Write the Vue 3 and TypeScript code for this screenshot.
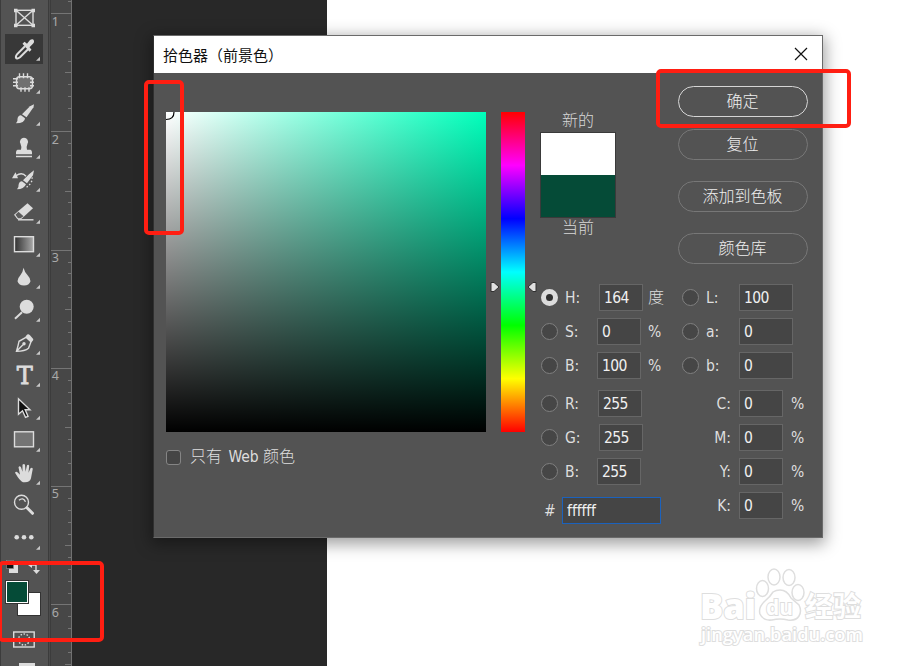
<script setup lang="ts">
import { ref } from 'vue'

interface Field {
  id: string
  label: string
  value: string
  unit?: string
  radio?: boolean
  shift?: string
}

const mode = ref('hue')

const hsb: Field[] = [
  { id: 'hue', label: 'H:', value: '164', unit: '度', radio: true, shift: 's2' },
  { id: 'sat', label: 'S:', value: '0', unit: '%', radio: true },
  { id: 'bri', label: 'B:', value: '100', unit: '%', radio: true },
]
const rgb: Field[] = [
  { id: 'red', label: 'R:', value: '255', radio: true, shift: 's1' },
  { id: 'green', label: 'G:', value: '255', radio: true, shift: 's2' },
  { id: 'blue', label: 'B:', value: '255', radio: true },
]
const lab: Field[] = [
  { id: 'l', label: 'L:', value: '100', radio: true },
  { id: 'a', label: 'a:', value: '0', radio: true },
  { id: 'b', label: 'b:', value: '0', radio: true },
]
const cmyk: Field[] = [
  { id: 'c', label: 'C:', value: '0', unit: '%' },
  { id: 'm', label: 'M:', value: '0', unit: '%' },
  { id: 'y', label: 'Y:', value: '0', unit: '%' },
  { id: 'k', label: 'K:', value: '0', unit: '%' },
]
const tools = [
  'frame', 'eyedropper', 'patch', 'brush', 'stamp', 'history', 'eraser', 'gradient', 'blur',
  'dodge', 'pen', 'type', 'select', 'shape', 'hand', 'zoom', 'more',
]
const noFlyout = ['frame', 'zoom']

const step = 118.25 / 10
const ticks = Array.from({ length: 57 }, (_, i) => {
  const n = i - 1
  const len = n % 10 === 0 ? 20 : n % 5 === 0 ? 6 : 3
  return { y: Math.round(13.2 + n * step) + 0.5, len }
})
const numbers = [1, 2, 3, 4, 5, 6].map((n) => ({ n, y: 26 + (n - 1) * 118.1 }))
</script>

<template>
  <div class="screen">
    <aside class="toolbar">
      <div v-for="t in tools" :key="t" class="tool" :class="{ active: t === 'eyedropper' }">
        <svg width="48" height="32.6" viewBox="-24 -16.3 48 32.6">
          <g v-if="t === 'frame'" class="line">
            <rect x="-8" y="-7" width="17" height="15" />
            <path d="M-8-7 9 8M9-7-8 8" />
            <path class="fill" stroke="none" d="M-10-8.500h3.500v3.500h-3.500zM7.500-8.500h3.500v3.500h-3.500zM-10 6.500h3.500v3.500h-3.500zM7.500 6.500h3.500v3.500h-3.500z" />
          </g>
          <g v-else-if="t === 'eyedropper'">
            <path class="line thick" d="M1-3-7 5Q-9 8-7.500 9-6 9.500-4 8L4 0" />
            <path class="fill" d="M-1.500-5.500.5-7.500 3-5.500 6-9.200Q9-11 10-8.500 10.500-7 9-5.500L5.500-2 7.500.5 5.500 2.500Z" />
          </g>
          <g v-else-if="t === 'patch'">
            <rect class="line" x="-7.500" y="-5.500" width="16" height="12" rx="3" style="fill: #707070" />
            <path class="line" d="M-4.500-9v5M-.5-9v5M3.500-9v5M-3 5v4.500M1 5v4.500M5 5v4.500M-11-3.500h5M-11 0h5M-11 3.500h5M6-3.500h4M6 0h4M6 3.500h4" />
          </g>
          <g v-else-if="t === 'brush'" class="fill">
            <path d="M10-10 9.500-7 2.500 3-2 0 6-8Z" />
            <path d="M-3 1 1 4Q1 9-8 9-6 7-6.500 4.500-6 1-3 1Z" />
          </g>
          <g v-else-if="t === 'stamp'" class="fill">
            <path d="M0-9.500A4 4 0 0 1 3.500-3.500Q2 0 3 2.500H6.500Q8 3 8 5V7H-8V5Q-8 3-6.500 2.500H-3Q-2 0-3.500-3.500A4 4 0 0 1 0-9.500ZM-8 8.500H8V10H-8Z" />
          </g>
          <g v-else-if="t === 'history'">
            <path class="fill" d="M10-10 9-5 3 3-1 0 5-6ZM-2 1 2 4Q0 9-7 9-5 7-5.500 5-5 1-2 1Z" />
            <path class="line" d="M-8-4.500Q-2-9 2-4" />
            <path class="fill" d="M-12-2-8.500-8-6-2Z" />
            <path class="line" stroke-dasharray="1.500 2" d="M8-3Q9 3 1 8" />
          </g>
          <g v-else-if="t === 'eraser'">
            <path class="fill" d="M3.500-9 9-4-3 7H-6.500L-10 2.500Z" />
            <path d="M-5.500-.5-.5 4-3.500 6H-6L-8.500 2.500Z" fill="#5c5c5c" />
            <path class="line" d="M-6 7.500H9.500" />
          </g>
          <g v-else-if="t === 'gradient'">
            <defs><linearGradient id="tool-ramp"><stop stop-color="#303030" /><stop offset="1" stop-color="#aaa" /></linearGradient></defs>
            <rect class="line" x="-9.500" y="-8.600" width="19" height="15" style="fill: url(#tool-ramp)" />
          </g>
          <path v-else-if="t === 'blur'" class="fill" d="M-.5-9.500Q.5-5 4-1.500 6.500 1 6.500 4A6.700 5.600 0 0 1-6.500 4Q-6.500 1-4-1.500-1-5-.5-9.500Z" />
          <g v-else-if="t === 'dodge'">
            <circle class="fill" cx="2.700" cy="-3.500" r="7" />
            <path class="line thick" d="M-2 2-9 8.500" />
          </g>
          <g v-else-if="t === 'pen'">
            <path class="line" d="M2-6-5-2Q-6 3-7.500 8 1 8 4.500 5L7-1.500ZM-7 7.500-1 1.500" />
            <circle class="fill" cx="0" cy=".5" r="1.700" />
            <path class="fill" d="M2.500-8Q4-10 6-8L9-4.500Q10-3.500 7.500-1L1.500-6.500Z" />
          </g>
          <text v-else-if="t === 'type'" class="type" x=".7" y="8.500" text-anchor="middle">T</text>
          <path v-else-if="t === 'select'" class="line" style="fill: #111" d="M-5.500-9.500V6L-1.500 2.500 1.500 9 4 8 1.200 1.500H6Z" />
          <rect v-else-if="t === 'shape'" class="line" x="-9.500" y="-8.500" width="19" height="15" style="fill: #747474" />
          <path v-else-if="t === 'hand'" class="fill" d="M-9-.5Q-8-2.500-6-.5L-4 1.500-5.500-6Q-4.500-8-3-6L-1.500-1.500V-8.500Q0-10 1-8.500L1.500-1.500 3-8Q4.500-9.500 5.200-7.500L4.500-.5 6.500-5Q8-6.500 8.800-4.500L7 5Q6 9 1 9H-1Q-4 8-9-.5Z" />
          <g v-else-if="t === 'zoom'">
            <circle class="line" cx="-2.500" cy="-4" r="7" />
            <path class="line" d="M-5-6Q-1-9.500 1.500-4.500" />
            <path class="line fat" d="M3 1.500 8.500 7" />
          </g>
          <g v-else class="fill">
            <circle cx="-7.300" cy="-1" r="2.300" /><circle cx="0" cy="-1" r="2.300" /><circle cx="7.300" cy="-1" r="2.300" />
          </g>
          <path v-if="!noFlyout.includes(t)" class="corner" d="M16 7.500V11.500H12Z" />
        </svg>
      </div>
      <svg class="palette" width="48" height="112" viewBox="0 554 48 112">
        <rect x="9" y="564" width="9" height="9" fill="#ddd" />
        <rect x="6.500" y="560.500" width="7" height="8" fill="#111" stroke="#888" stroke-width=".7" />
        <path class="line" d="M30 565h6v6" />
        <path class="fill" d="M28 565l4-3v6zM33 570h7l-3.500 4z" />
        <rect x="17.500" y="592.500" width="23" height="23" fill="#fff" stroke="#333" />
        <rect x="5.500" y="580.500" width="23" height="23" fill="#fff" stroke="#333" />
        <rect x="7" y="582" width="20" height="20" fill="#054b37" />
        <rect class="line" x="13.700" y="632" width="20.500" height="15" />
        <circle class="line" cx="24" cy="639.500" r="5.500" stroke-dasharray="1.500 1.600" />
        <rect class="fill" x="19" y="663" width="16" height="3" />
      </svg>
    </aside>

    <svg class="ruler" width="24" height="666" viewBox="48 0 24 666">
      <rect x="48" y="0" width="3" height="666" fill="#3c3c3c" />
      <rect x="49" y="0" width="1" height="666" fill="#4b4b4b" />
      <path v-for="k in ticks" :key="k.y" :d="`M${71 - k.len} ${k.y}H71`" stroke="#757575" />
      <path d="M71.500 0V666" stroke="#707070" />
      <text v-for="m in numbers" :key="m.n" x="51.700" :y="m.y">{{ m.n }}</text>
    </svg>
    <div class="canvas"></div>

    <section class="dialog">
      <header>
        <h1>拾色器（前景色）</h1>
        <svg width="14" height="14" viewBox="0 0 14 14"><path d="M1 1 13 13M13 1 1 13" stroke="#111" stroke-width="1.200" /></svg>
      </header>
      <div class="body">
        <div class="picker">
          <div class="spectra">
            <div class="plane">
              <svg width="9" height="9"><path d="M8 0Q8 7.500 0 7.500" fill="none" stroke="#000" stroke-width="1.200" /></svg>
            </div>
            <div class="slider">
              <svg width="10" height="12" viewBox="0 0 10 12"><path d="M1 1.500H4L9 6 4 10.500H1Z" /></svg>
              <div class="hue"></div>
              <svg width="10" height="12" viewBox="0 0 10 12"><path d="M9 1.500H6L1 6 6 10.500H9Z" /></svg>
            </div>
          </div>
          <label class="web"><i></i><span>只有 <b>Web</b> 颜色</span></label>
        </div>
        <div class="side">
          <div class="top">
            <div class="compare">
              <span>新的</span>
              <div class="chips"><i class="new"></i><i class="old"></i></div>
              <span>当前</span>
            </div>
            <div class="actions">
              <button class="primary">确定</button>
              <button>复位</button>
              <button>添加到色板</button>
              <button>颜色库</button>
            </div>
          </div>
          <div class="values">
            <div class="left">
              <div v-for="(group, g) in [hsb, rgb]" :key="g" class="group">
                <div v-for="f in group" :key="f.id" class="row">
                  <i class="radio" :class="{ on: f.id === mode }" @click="mode = f.id"></i>
                  <span class="name">{{ f.label }}</span>
                  <span class="input" :class="f.shift">{{ f.value }}</span>
                  <span v-if="f.unit" class="unit" :class="{ cjk: f.unit === '度' }">{{ f.unit }}</span>
                </div>
              </div>
              <div class="row hex"><span>#</span><span class="input">ffffff</span></div>
            </div>
            <div class="right">
              <div class="group">
                <div v-for="f in lab" :key="f.id" class="row">
                  <i class="radio"></i>
                  <span class="name">{{ f.label }}</span>
                  <span class="input wide">{{ f.value }}</span>
                </div>
              </div>
              <div class="group">
                <div v-for="f in cmyk" :key="f.id" class="row ink">
                  <span class="name">{{ f.label }}</span>
                  <span class="input">{{ f.value }}</span>
                  <span class="unit">{{ f.unit }}</span>
                </div>
              </div>
            </div>
          </div>
        </div>
      </div>
    </section>

    <svg class="watermark" width="180" height="90" viewBox="690 562 180 90">
      <g class="ghost">
        <text class="bai" x="700" y="619" font-size="36" textLength="56" lengthAdjust="spacingAndGlyphs">Bai</text>
        <ellipse cx="762.500" cy="588.500" rx="6" ry="8" />
        <ellipse cx="774" cy="577" rx="6" ry="8" />
        <ellipse cx="789" cy="577.500" rx="6" ry="8" />
        <ellipse cx="798" cy="592.500" rx="6" ry="8" />
        <path d="M780 590Q787 590 791 598L799 605Q802 611 799 616 796 621 788 620 780 618 772 620 763 621 760 614 758 607 765 601 770 597 773 592 776 590 780 590Z" />
        <text x="766" y="615" font-size="22" font-weight="700" textLength="27" lengthAdjust="spacingAndGlyphs">du</text>
        <text class="han" x="805" y="617" font-size="28">经验</text>
        <text class="url" x="701" y="641" font-size="18" textLength="162" lengthAdjust="spacingAndGlyphs">jingyan.baidu.com</text>
      </g>
    </svg>

    <div class="mark mark-plane"></div>
    <div class="mark mark-ok"></div>
    <div class="mark mark-colors"></div>
  </div>
</template>

<style>
body { overflow: hidden; background: #fff; }
</style>

<style scoped>
.screen {
  position: relative;
  display: flex;
  width: 913px;
  height: 666px;
  overflow: hidden;
  background: #fff;
  font-family: "DejaVu Sans Condensed", "DejaVu Sans", "Noto Sans CJK SC", sans-serif;
  font-stretch: condensed;
}
i, b { font-style: normal; font-weight: 400; }
.toolbar {
  box-sizing: border-box;
  width: 48px;
  height: 666px;
  padding-top: 0.6px;
  background: #535353;
  box-shadow: inset 1px 0 #3c3c3c;
}
.tool { height: 32.6px; }
.tool svg, .palette { display: block; }
.tool.active svg {
  background: linear-gradient(#383838, #383838) 5px 1px / 38px 30px no-repeat;
}
.line { fill: none; stroke: #dcdcdc; stroke-width: 1.4; }
.thick { stroke-width: 2; }
.fat { stroke-width: 3; stroke-linecap: round; }
.fill { fill: #dcdcdc; }
.corner { fill: #c8c8c8; }
.type { font: 24px "DejaVu Serif", serif; fill: #dcdcdc; stroke: #dcdcdc; stroke-width: 0.8; }
.palette { margin-top: -0.8px; }
.ruler { background: #474747; flex: none; }
.ruler text { font: 12.5px "Noto Sans", sans-serif; fill: #a9a9a9; }
.canvas { width: 255px; background: #282828; }

.dialog {
  position: absolute;
  left: 153px;
  top: 35px;
  box-sizing: border-box;
  width: 670px;
  height: 503px;
  border: 1px solid #6a6a6a;
  border-left-color: #303030;
  background: #535353;
  box-shadow: 0 4px 15px 2px rgba(0, 0, 0, 0.38);
}
header {
  display: flex;
  align-items: center;
  justify-content: space-between;
  height: 37px;
  padding: 0 14px 0 9px;
  background: #fff;
}
header svg { margin-top: -1px; }
h1 { margin: 0; font: 400 15px/20px "Noto Sans CJK SC", sans-serif; color: #111; }
.body { display: flex; padding-left: 12px; color: #dedede; }
.picker { padding-top: 39px; width: 374px; }
.spectra { display: flex; gap: 4px; }
.plane {
  width: 320px;
  height: 320px;
  background: linear-gradient(to bottom, transparent, #000), linear-gradient(to right, #fff, #00ffbb);
}
.plane svg, .slider svg { display: block; }
.slider { display: flex; }
.slider svg { margin-top: 169px; flex: none; fill: #e0e0e0; stroke: #303030; stroke-width: 1; }
.slider svg:first-child { margin-right: 1px; }
.slider svg:last-child { margin-left: 2px; }
.hue {
  width: 24px;
  height: 320px;
  background: linear-gradient(#f00, #f0f 16.66%, #00f 33.33%, #0ff 50%, #0f0 66.66%, #ff0 83.33%, #f00);
}
.web { display: flex; align-items: center; gap: 9px; margin-top: 14px; height: 22px; font: 16px/22px "Noto Sans CJK SC", sans-serif; font-weight: 300; }
.web span { margin-top: -4px; }
.web i { box-sizing: border-box; width: 15px; height: 15px; border: 1px solid #858585; border-radius: 3px; background: #454545; }
.web b { font: 15.500px "DejaVu Sans Condensed", sans-serif; font-stretch: condensed; margin: 0 1px 0 3px; letter-spacing: -0.1px; }
.side { width: 282px; }
.top { display: flex; height: 211px; }
.compare {
  width: 76px;
  padding-top: 36px;
  text-align: center;
  font: 300 16px/20px "Noto Sans CJK SC", sans-serif;
  color: #d8d8d8;
}
.compare span { display: block; height: 20px; }
.chips { box-sizing: border-box; height: 86px; margin: 3px 0 -2px; border: 1px solid #3a3a3a; }
.chips i { display: block; height: 42px; }
.new { background: #fff; }
.old { background: #054b37; }
.actions { display: flex; flex-direction: column; gap: 21px; margin-left: 62px; padding-top: 13px; }
button {
  box-sizing: border-box;
  width: 130px;
  height: 31px;
  padding: 0 1px 2px 0;
  border: 1px solid #777;
  border-radius: 16px;
  background: transparent;
  color: #eee;
  font: 300 16px/27px "Noto Sans CJK SC", sans-serif;
}
button.primary { margin-bottom: -9px; border: 1.500px solid #d5d5d5; }
.values { display: flex; padding-left: 1px; font-size: 15.500px; letter-spacing: -0.6px; }
.left { width: 141px; }
.group { display: flex; flex-direction: column; gap: 7px; margin-bottom: 11px; }
.row { display: flex; align-items: center; height: 27px; white-space: nowrap; }
.radio { box-sizing: border-box; flex: none; width: 17px; height: 17px; border: 1px solid #808080; border-radius: 50%; background: #464646; }
.radio.on { border: 5px solid #dcdcdc; background: #303030; }
.name { width: 32px; margin-left: 7px; letter-spacing: 0; }
.input {
  box-sizing: border-box;
  flex: none;
  width: 44px;
  height: 27px;
  padding-left: 4px;
  border: 1px solid #666;
  background: #454545;
  color: #f0f0f0;
  line-height: 26px;
}
.s1 { margin-left: 1px; }
.s2 { margin-left: 2px; margin-right: -2px; }
.unit { margin-left: 7px; }
.unit.cjk { margin-top: -3px; font: 300 16px/20px "Noto Sans CJK SC", sans-serif; }
.hex { margin-top: 12px; padding-left: 3px; }
.hex .input { width: 99px; margin-left: 7px; border-color: #1b62bd; letter-spacing: -0.1px; }
.right .name { width: 33px; }
.input.wide { width: 54px; }
.ink .name { box-sizing: border-box; width: 50px; margin-left: 0; margin-right: 7px; padding-right: 1px; text-align: right; }
.ink .unit { margin-left: 8px; }

.watermark { position: absolute; left: 690px; top: 562px; }
.ghost { fill: #fff; stroke: #dedede; stroke-width: 1.5; }
.ghost text { font-family: "Open Sans", sans-serif; font-stretch: normal; paint-order: stroke; stroke-width: 2; }
.ghost .bai { font-weight: 800; }
.ghost .url { font-weight: 600; }
.ghost .han { font-family: "Noto Sans CJK SC", sans-serif; font-weight: 700; }
.mark { position: absolute; box-sizing: border-box; border: 4px solid #ff1e12; border-radius: 5px; }
.mark-plane { left: 144px; top: 80px; width: 40px; height: 155px; }
.mark-ok { left: 656px; top: 69px; width: 195px; height: 59px; }
.mark-colors { left: -2px; top: 561px; width: 106px; height: 81px; }
</style>
